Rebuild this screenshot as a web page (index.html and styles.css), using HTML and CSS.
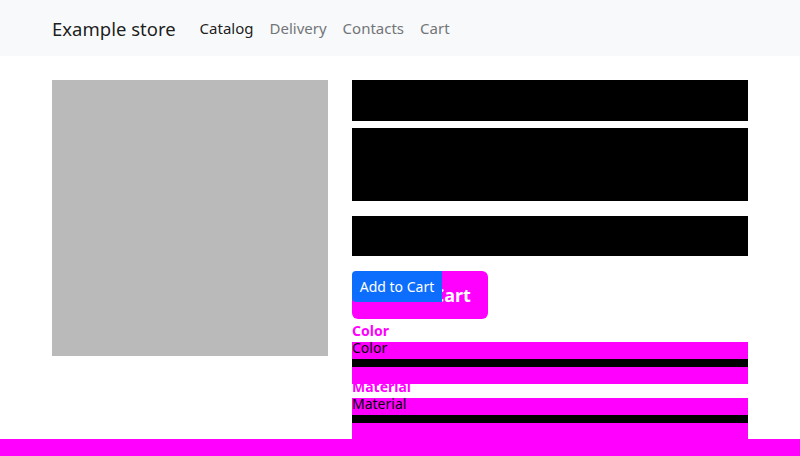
FILE: index.html
```html
<!DOCTYPE html>
<html lang="en">
<head>
<meta charset="utf-8">
<title>Example store</title>
<link rel="stylesheet" href="styles.css">
</head>
<body>
<nav class="navbar">
  <a class="brand" href="#">Example store</a>
  <ul class="nav-links">
    <li><a class="nav-link active" href="#">Catalog</a></li>
    <li><a class="nav-link" href="#">Delivery</a></li>
    <li><a class="nav-link" href="#">Contacts</a></li>
    <li><a class="nav-link" href="#">Cart</a></li>
  </ul>
</nav>
<main class="container">
  <div class="product-image"></div>
  <div class="product-info">
    <div class="bar bar-title"></div>
    <div class="bar bar-desc"></div>
    <div class="bar bar-price"></div>
    <div class="cart-area">
      <button class="btn-big">Add to Cart</button>
      <button class="btn-small">Add to Cart</button>
    </div>
    <div class="opt-label">Color</div>
    <div class="field">
      <span class="field-text">Color</span>
      <div class="field-top"></div>
      <div class="field-line"></div>
      <div class="field-bottom"></div>
    </div>
    <div class="opt-label opt-label-second">Material</div>
    <div class="field">
      <span class="field-text">Material</span>
      <div class="field-top"></div>
      <div class="field-line"></div>
      <div class="field-bottom"></div>
    </div>
  </div>
</main>
<footer class="footer"></footer>
</body>
</html>
```
FILE: styles.css
```css
* { box-sizing: border-box; }
html, body { margin: 0; padding: 0; }
body {
  font-family: "Noto Sans", "Open Sans", "Liberation Sans", sans-serif;
  background: #fff;
  color: #212529;
  overflow: hidden;
}
.navbar {
  height: 56px;
  background: #f8f9fa;
  display: flex;
  align-items: center;
  padding: 0 52px;
}
.brand {
  font-size: 18.5px;
  color: rgba(0,0,0,.9);
  text-decoration: none;
  margin-right: 16px;
}
.nav-links {
  list-style: none;
  margin: 0;
  padding: 0;
  display: flex;
}
.nav-link {
  display: block;
  padding: 0 8px;
  font-size: 15px;
  color: #727579;
  text-decoration: none;
}
.nav-link.active { color: rgba(0,0,0,.9); }
.container {
  display: flex;
  gap: 24px;
  padding: 24px 52px 0;
}
.product-image {
  width: 276px;
  height: 276px;
  background: #bababa;
  flex: none;
}
.product-info {
  width: 396px;
  display: flex;
  flex-direction: column;
}
.bar { background: #000; }
.bar-title { height: 41px; margin-bottom: 7px; }
.bar-desc { height: 73px; margin-bottom: 15px; }
.bar-price { height: 40px; margin-bottom: 15px; }
.cart-area {
  position: relative;
  height: 48px;
}
.btn-big {
  width: 136px;
  height: 48px;
  border: 0;
  border-radius: 6px;
  background: #ff00ff;
  color: #fff;
  font-family: inherit;
  font-weight: 700;
  font-size: 18px;
  padding: 0;
}
.btn-small {
  position: absolute;
  left: 0;
  top: 0;
  width: 90px;
  height: 31px;
  border: 0;
  border-radius: 4px 0 0 4px;
  background: #0d6efd;
  color: #fff;
  font-family: inherit;
  font-size: 14px;
  padding: 0;
}
.opt-label {
  height: 23px;
  line-height: 23px;
  font-weight: 700;
  font-size: 14px;
  color: #ff00ff;
}
.opt-label-second {
  height: 20px;
  line-height: 18px;
  margin-top: -6px;
  position: relative;
}
.field {
  position: relative;
}
.field-text {
  position: absolute;
  left: 0;
  top: -2px;
  font-size: 14px;
  line-height: 16px;
  color: #000;
}
.field-top { height: 17px; background: #ff00ff; }
.field-line { height: 8px; background: #000; }
.field-bottom { height: 17px; background: #ff00ff; }
.footer {
  height: 20px;
  background: #ff00ff;
  margin-top: -1px;
  position: relative;
}
```
